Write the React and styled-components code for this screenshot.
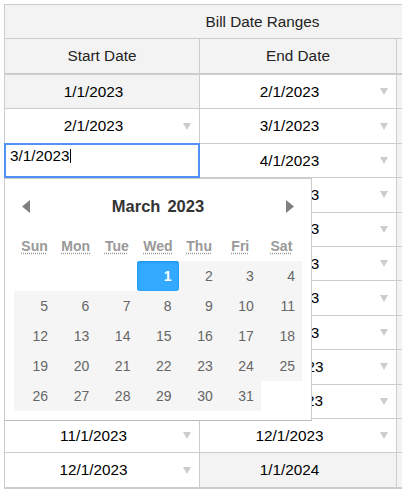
import React from "react";
import styled, { createGlobalStyle } from "styled-components";

const GlobalStyle = createGlobalStyle`
  html, body {
    margin: 0;
    padding: 0;
    overflow: hidden;
    background: #fff;
    font-family: "Liberation Sans", Arial, sans-serif;
  }
`;

const Frame = styled.div`
  padding: 4px 0 0 4px;
  width: 600px;
`;

const Grid = styled.table`
  border-collapse: separate;
  border-spacing: 0;
  table-layout: fixed;
  width: 517px;
  border-top: 1px solid #ccc;
  border-left: 1px solid #ccc;
  font-size: 15.3px;
  color: #000;
`;

const Col = styled.col`
  width: ${(p) => p.$w}px;
`;

const HeadCell = styled.th`
  box-sizing: border-box;
  height: ${(p) => (p.$thick ? 36 : 34)}px;
  padding: 0 4px;
  background: #f3f3f3;
  color: #222;
  font-weight: normal;
  text-align: center;
  border-right: 1px solid #ccc;
  border-bottom: ${(p) => (p.$thick ? 2 : 1)}px solid #ccc;
`;

const BodyCell = styled.td`
  box-sizing: border-box;
  position: relative;
  height: ${(p) => (p.$last ? 35.42 : 34.42)}px;
  padding: 0 4px;
  background: ${(p) => (p.$gray ? "#f3f3f3" : "#fff")};
  border-right: 1px solid #ccc;
  border-bottom: ${(p) => (p.$last ? 2 : 1)}px solid #ccc;
  white-space: nowrap;
`;

const CellInner = styled.div`
  display: flex;
  align-items: center;
`;

const CellText = styled.span`
  flex: 1;
  text-align: center;
`;

const DropArrow = styled.span`
  width: 17px;
  display: flex;
  justify-content: center;
  visibility: ${(p) => (p.$hidden ? "hidden" : "visible")};
  &::before {
    content: "";
    border-left: 4px solid transparent;
    border-right: 4px solid transparent;
    border-top: 7px solid #cdcdcd;
  }
`;

const Editor = styled.div`
  position: absolute;
  top: -1px;
  left: -1px;
  right: -1px;
  bottom: -1px;
  box-sizing: border-box;
  padding: 4px 6px;
  background: #fff;
  box-shadow: inset 0 0 0 2px #5292f7;
  line-height: normal;
  text-align: left;
`;

const Caret = styled.span`
  display: inline-block;
  width: 1px;
  height: 14px;
  background: #000;
  vertical-align: -2px;
`;

const Picker = styled.div`
  position: absolute;
  top: calc(100% + 1px);
  left: -1px;
  z-index: 10;
  box-sizing: border-box;
  width: 308px;
  padding: 9px;
  background: #fff;
  border: 1px solid #ccc;
  border-bottom-color: #bbb;
  color: #333;
`;

const PickerTitle = styled.div`
  height: 36px;
  display: flex;
  align-items: center;
  justify-content: space-between;
`;

const NavButton = styled.button`
  width: 24px;
  height: 36px;
  padding: 0;
  border: 0;
  background: transparent;
  display: flex;
  align-items: center;
  justify-content: center;
`;

const TitleLabels = styled.div`
  display: flex;
  gap: 7px;
  font-size: 16.5px;
  font-weight: bold;
  color: #333;
`;

const Calendar = styled.div`
  display: grid;
  grid-template-columns: repeat(7, 1fr);
  grid-template-rows: 37px;
  grid-auto-rows: 30px;
`;

const Weekday = styled.abbr`
  height: 37px;
  box-sizing: border-box;
  padding-top: 8px;
  line-height: 29px;
  text-align: center;
  font-size: 14px;
  font-weight: bold;
  color: #999;
  text-decoration: underline dotted;
  text-underline-offset: 2px;
  cursor: help;
`;

const Day = styled.div`
  box-sizing: border-box;
  padding-right: 7px;
  line-height: 30px;
  text-align: right;
  font-size: 14px;
  color: ${(p) => (p.$kind === "selected" ? "#fff" : "#666")};
  font-weight: ${(p) => (p.$kind === "selected" ? "bold" : "normal")};
  background: ${(p) =>
    p.$kind === "selected" ? "#33aaff" : p.$kind === "day" ? "#f5f5f5" : "transparent"};
  border-radius: ${(p) => (p.$kind === "selected" ? "3px" : "0")};
  box-shadow: ${(p) => (p.$kind === "selected" ? "inset 0 1px 3px #178fe5" : "none")};
`;

const weekdays = [
  ["Sun", "Sunday"],
  ["Mon", "Monday"],
  ["Tue", "Tuesday"],
  ["Wed", "Wednesday"],
  ["Thu", "Thursday"],
  ["Fri", "Friday"],
  ["Sat", "Saturday"],
];

const rows = Array.from({ length: 12 }, (_, i) => ({
  start: `${i + 1}/1/2023`,
  end: i < 11 ? `${i + 2}/1/2023` : "1/1/2024",
}));

function Arrow({ dir }) {
  return (
    <svg width="8" height="13" viewBox="0 0 8 13">
      {dir === "left" ? (
        <polygon points="8,0 0,6.5 8,13" fill="#808080" />
      ) : (
        <polygon points="0,0 8,6.5 0,13" fill="#808080" />
      )}
    </svg>
  );
}

function DatePicker() {
  const cells = [];
  for (let i = 0; i < 3; i++) cells.push(<Day key={"e" + i} $kind="empty" />);
  for (let d = 1; d <= 31; d++)
    cells.push(
      <Day key={d} $kind={d === 1 ? "selected" : "day"}>
        {d}
      </Day>
    );
  return (
    <Picker>
      <PickerTitle>
        <NavButton aria-label="Previous Month">
          <Arrow dir="left" />
        </NavButton>
        <TitleLabels>
          <span>March</span>
          <span>2023</span>
        </TitleLabels>
        <NavButton aria-label="Next Month">
          <Arrow dir="right" />
        </NavButton>
      </PickerTitle>
      <Calendar>
        {weekdays.map(([s, l]) => (
          <Weekday key={s} title={l}>
            {s}
          </Weekday>
        ))}
        {cells}
      </Calendar>
    </Picker>
  );
}

function DateCell({ value, gray, last }) {
  return (
    <BodyCell $gray={gray} $last={last}>
      <CellInner>
        <CellText>{value}</CellText>
        <DropArrow $hidden={gray} />
      </CellInner>
    </BodyCell>
  );
}

export default function App() {
  return (
    <>
      <GlobalStyle />
      <Frame>
        <Grid>
          <colgroup>
            <Col $w={195} />
            <Col $w={197} />
            <Col $w={124} />
          </colgroup>
          <thead>
            <tr>
              <HeadCell colSpan={3}>Bill Date Ranges</HeadCell>
            </tr>
            <tr>
              <HeadCell $thick>Start Date</HeadCell>
              <HeadCell $thick>End Date</HeadCell>
              <HeadCell $thick />
            </tr>
          </thead>
          <tbody>
            {rows.map((r, i) => {
              const last = i === rows.length - 1;
              return (
                <tr key={r.start}>
                  {i === 2 ? (
                    <BodyCell>
                      <CellInner>
                        <CellText>{r.start}</CellText>
                        <DropArrow />
                      </CellInner>
                      <Editor>
                        {r.start}
                        <Caret />
                      </Editor>
                      <DatePicker />
                    </BodyCell>
                  ) : (
                    <DateCell value={r.start} gray={i === 0} last={last} />
                  )}
                  <DateCell value={r.end} gray={last} last={last} />
                  <BodyCell $gray $last={last} />
                </tr>
              );
            })}
          </tbody>
        </Grid>
      </Frame>
    </>
  );
}
